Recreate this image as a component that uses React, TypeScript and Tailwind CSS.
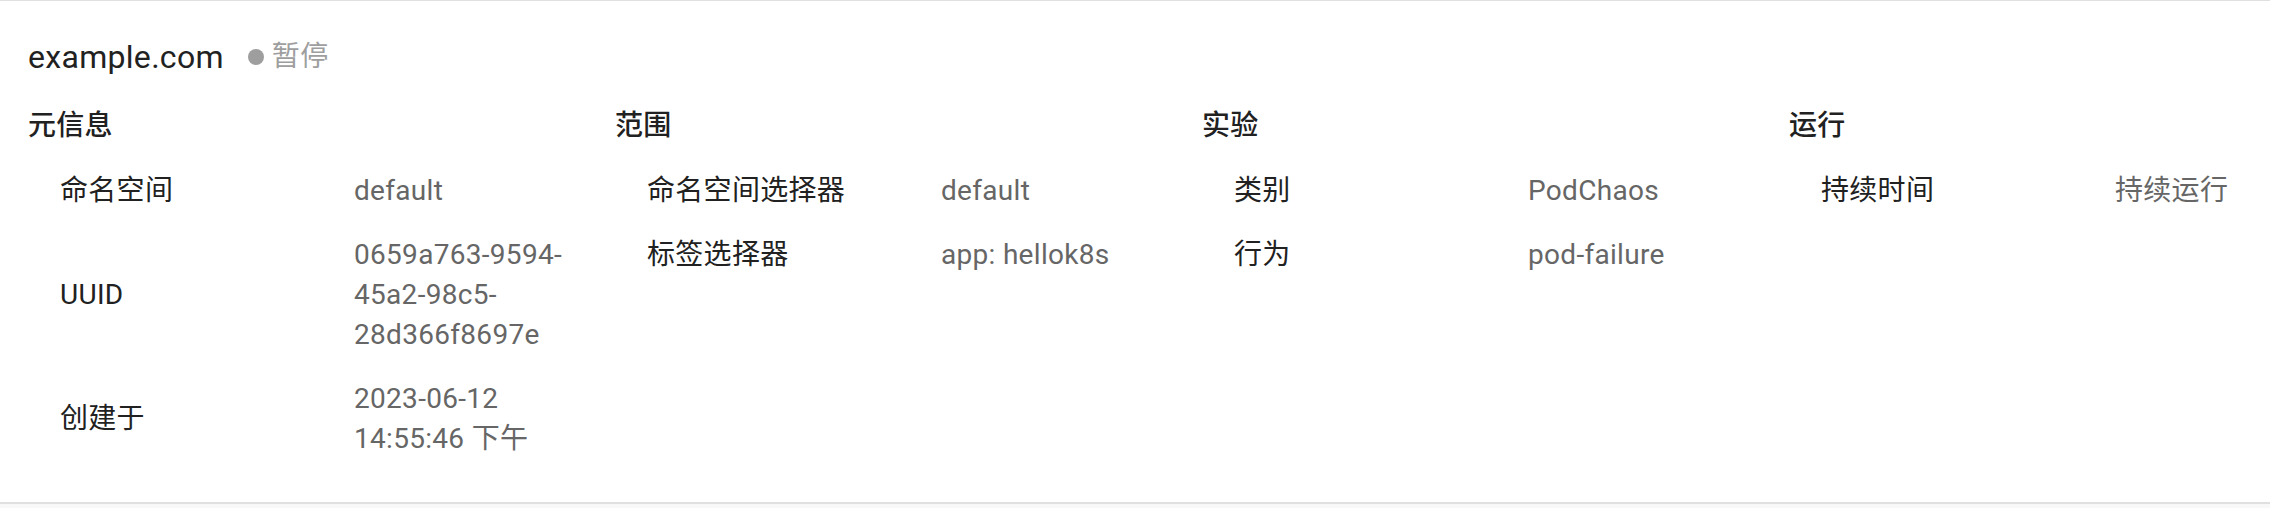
const sections = [
  {
    title: "元信息",
    rows: [
      { label: "命名空间", value: "default" },
      { label: "UUID", value: "0659a763-9594-45a2-98c5-28d366f8697e" },
      { label: "创建于", value: "2023-06-12 14:55:46 下午" },
    ],
  },
  {
    title: "范围",
    rows: [
      { label: "命名空间选择器", value: "default" },
      { label: "标签选择器", value: "app: hellok8s" },
    ],
  },
  {
    title: "实验",
    rows: [
      { label: "类别", value: "PodChaos" },
      { label: "行为", value: "pod-failure" },
    ],
  },
  {
    title: "运行",
    rows: [{ label: "持续时间", value: "持续运行" }],
  },
];

function Section({ title, rows }: { title: string; rows: { label: string; value: string }[] }) {
  return (
    <div>
      <div className="text-[28px] leading-[42px] font-medium text-[#212121]">{title}</div>
      <table className="mt-[12px] border-collapse">
        <tbody>
          {rows.map((r) => (
            <tr key={r.label}>
              <td className="w-[294px] pl-8 pr-4 py-3 align-middle text-[28px] leading-[40px] text-[#212121]">
                {r.label}
              </td>
              <td className="w-[293px] pl-8 pr-12 py-3 align-middle text-[28px] leading-[40px] text-[#666666]">
                {r.value}
              </td>
            </tr>
          ))}
        </tbody>
      </table>
    </div>
  );
}

export default function App() {
  return (
    <div
      className="w-full h-[508px] overflow-hidden bg-[#f8f8f8]"
      style={{ fontFamily: "Roboto, 'Noto Sans CJK SC', sans-serif" }}
    >
      <div className="bg-white border-t border-[#e0e0e0] border-b-2 border-b-[#e0e0e0] h-[504px] pt-8 pl-[28px] tracking-[0.3px]">
        <div className="flex items-center h-[48px]">
          <span className="text-[32px] leading-[48px] text-[#212121]">example.com</span>
          <span className="ml-6 flex items-center gap-2 text-[28px] text-[#9e9e9e]">
            <span className="w-4 h-4 rounded-full bg-[#9e9e9e]" />
            暂停
          </span>
        </div>
        <div className="mt-6 grid grid-cols-[repeat(4,587px)]">
          {sections.map((s) => (
            <Section key={s.title} title={s.title} rows={s.rows} />
          ))}
        </div>
      </div>
    </div>
  );
}
